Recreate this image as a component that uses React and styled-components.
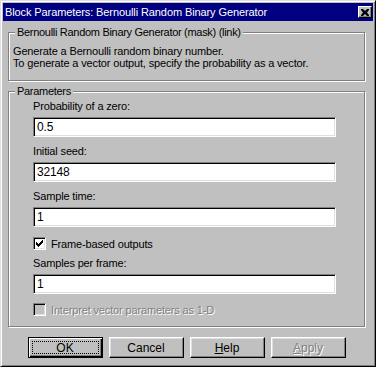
import React from "react";
import styled, { createGlobalStyle } from "styled-components";

const Global = createGlobalStyle`
  body {
    margin: 0;
    background: #c0c0c0;
    font-family: "Liberation Sans", Arial, sans-serif;
    font-size: 11px;
    color: #000;
  }
`;

const Window = styled.div`
  width: 376px;
  height: 367px;
  box-sizing: border-box;
  background: #c0c0c0;
  border: 1px solid;
  border-color: #dfdfdf #000 #000 #dfdfdf;
  box-shadow: inset 1px 1px #fff, inset -1px -1px #808080;
  padding: 2px;
  display: flex;
  flex-direction: column;
`;

const TitleBar = styled.div`
  height: 18px;
  background: #000080;
  color: #fff;
  display: flex;
  align-items: center;
  justify-content: space-between;
  padding: 0 1px 0 2px;
  font-size: 11px;
  letter-spacing: -0.1px;
`;

const CloseButton = styled.div`
  width: 14px;
  height: 12px;
  box-sizing: border-box;
  background: #c0c0c0;
  border: 1px solid;
  border-color: #fff #000 #000 #fff;
  box-shadow: inset -1px -1px #808080;
  display: flex;
  align-items: center;
  justify-content: center;
`;

const Body = styled.div`
  padding: 11px 8px 0 5px;
  display: flex;
  flex-direction: column;
`;

const Group = styled.div`
  position: relative;
  border: 1px solid #808080;
  box-shadow: 1px 1px 0 #fff, inset 1px 1px 0 #fff;
  margin-top: ${(p) => p.$gap || 0}px;
  padding: ${(p) => p.$pad};
  display: flex;
  flex-direction: column;
  line-height: 12px;
  letter-spacing: -0.15px;
`;

const Legend = styled.span`
  position: absolute;
  top: -7px;
  left: 6px;
  padding: 0 2px;
  background: #c0c0c0;
  line-height: 12px;
  letter-spacing: -0.3px;
`;

const Label = styled.div`
  line-height: 12px;
  margin-top: ${(p) => p.$gap || 0}px;
  margin-bottom: 5px;
`;

const Field = styled.div`
  height: 20px;
  box-sizing: border-box;
  background: #fff;
  border: 1px solid;
  border-color: #808080 #fff #fff #808080;
  box-shadow: inset 1px 1px #000, inset -1px -1px #dfdfdf;
  padding: 0 3px;
  display: flex;
  align-items: center;
  font-size: 12px;
`;

const CheckRow = styled.div`
  display: flex;
  align-items: center;
  gap: 5px;
  margin-top: ${(p) => p.$gap}px;
  height: 13px;
  color: ${(p) => (p.$disabled ? "#808080" : "#000")};
  text-shadow: ${(p) => (p.$disabled ? "1px 1px 0 #fff" : "none")};
`;

const Box = styled.div`
  width: 13px;
  height: 13px;
  box-sizing: border-box;
  background: ${(p) => (p.$disabled ? "#c0c0c0" : "#fff")};
  border: 1px solid;
  border-color: #808080 #fff #fff #808080;
  box-shadow: inset 1px 1px #000, inset -1px -1px #dfdfdf;
  display: flex;
  align-items: center;
  justify-content: center;
`;

const ButtonRow = styled.div`
  display: flex;
  justify-content: center;
  gap: 6px;
  margin-top: 10px;
`;

const Button = styled.div`
  width: 75px;
  height: 21px;
  box-sizing: border-box;
  background: #c0c0c0;
  border: 1px solid;
  border-color: #fff #000 #000 #fff;
  box-shadow: inset -1px -1px #808080, inset 1px 1px #dfdfdf;
  display: flex;
  align-items: center;
  justify-content: center;
  position: relative;
  font-size: 12px;
  color: ${(p) => (p.$disabled ? "#808080" : "#000")};
  text-shadow: ${(p) => (p.$disabled ? "1px 1px 0 #fff" : "none")};
`;

const DefaultButton = styled(Button)`
  border-color: #000;
  box-shadow: inset 1px 1px #fff, inset -1px -1px #000, inset -2px -2px #808080;
`;

const Focus = styled.span`
  position: absolute;
  inset: 3px;
  border: 1px dotted #000;
`;

const Key = styled.span`
  text-decoration: underline;
`;

const Check = () => (
  <svg width="7" height="7" viewBox="0 0 7 7">
    <path d="M0 2h1v1h1v1h1v-1h1v-1h1v-1h1v-1h1v3h-1v1h-1v1h-1v1h-1v1h-1v-1h-1v-1h-1v-1h-1z" fill="#000" />
  </svg>
);

const CloseGlyph = () => (
  <svg width="8" height="7" viewBox="0 0 8 7">
    <path d="M0 0h2l2 2 2-2h2v1l-2 2.5 2 2.5v1h-2l-2-2-2 2h-2v-1l2-2.5-2-2.5z" fill="#000" />
  </svg>
);

const fields = [
  { label: "Probability of a zero:", value: "0.5" },
  { label: "Initial seed:", value: "32148" },
  { label: "Sample time:", value: "1" },
];

export default function App() {
  return (
    <>
      <Global />
      <Window>
        <TitleBar>
          <span>Block Parameters: Bernoulli Random Binary Generator</span>
          <CloseButton>
            <CloseGlyph />
          </CloseButton>
        </TitleBar>
        <Body>
          <Group $pad="12px 4px 11px 4px">
            <Legend>Bernoulli Random Binary Generator (mask) (link)</Legend>
            <div>Generate a Bernoulli random binary number.</div>
            <div>To generate a vector output, specify the probability as a vector.</div>
          </Group>
          <Group $gap={10} $pad="8px 28px 10px 24px">
            <Legend>Parameters</Legend>
            {fields.map((f, i) => (
              <React.Fragment key={f.label}>
                <Label $gap={i ? 8 : 0}>{f.label}</Label>
                <Field>{f.value}</Field>
              </React.Fragment>
            ))}
            <CheckRow $gap={10}>
              <Box>
                <Check />
              </Box>
              Frame-based outputs
            </CheckRow>
            <Label $gap={7}>Samples per frame:</Label>
            <Field>1</Field>
            <CheckRow $gap={9} $disabled>
              <Box $disabled />
              Interpret vector parameters as 1-D
            </CheckRow>
          </Group>
          <ButtonRow>
            <DefaultButton>
              <Focus />
              OK
            </DefaultButton>
            <Button>Cancel</Button>
            <Button>
              <span>
                <Key>H</Key>elp
              </span>
            </Button>
            <Button $disabled>
              <span>
                <Key>A</Key>pply
              </span>
            </Button>
          </ButtonRow>
        </Body>
      </Window>
    </>
  );
}
